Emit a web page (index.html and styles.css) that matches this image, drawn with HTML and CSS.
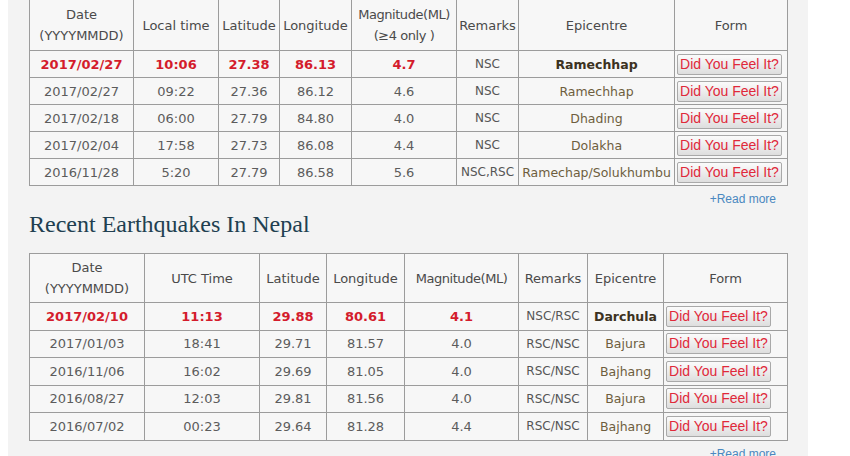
FILE: index.html
```html
<!DOCTYPE html>
<html>
<head>
<meta charset="utf-8">
<link rel="stylesheet" href="styles.css">
</head>
<body>
<div class="panel">
  <table class="quakes t1">
    <colgroup><col><col><col><col><col><col><col><col></colgroup>
    <tr class="head">
      <th>Date<br>(YYYYMMDD)</th>
      <th>Local time</th>
      <th>Latitude</th>
      <th>Longitude</th>
      <th class="mag">Magnitude(ML)<br>(≥4 only )</th>
      <th>Remarks</th>
      <th>Epicentre</th>
      <th>Form</th>
    </tr>
    <tr class="latest">
      <td>2017/02/27</td><td>10:06</td><td>27.38</td><td>86.13</td><td>4.7</td>
      <td class="rem">NSC</td><td class="epi">Ramechhap</td>
      <td class="form"><span class="btn">Did You Feel It?</span></td>
    </tr>
    <tr>
      <td>2017/02/27</td><td>09:22</td><td>27.36</td><td>86.12</td><td>4.6</td>
      <td class="rem">NSC</td><td class="epi">Ramechhap</td>
      <td class="form"><span class="btn">Did You Feel It?</span></td>
    </tr>
    <tr>
      <td>2017/02/18</td><td>06:00</td><td>27.79</td><td>84.80</td><td>4.0</td>
      <td class="rem">NSC</td><td class="epi">Dhading</td>
      <td class="form"><span class="btn">Did You Feel It?</span></td>
    </tr>
    <tr>
      <td>2017/02/04</td><td>17:58</td><td>27.73</td><td>86.08</td><td>4.4</td>
      <td class="rem">NSC</td><td class="epi">Dolakha</td>
      <td class="form"><span class="btn">Did You Feel It?</span></td>
    </tr>
    <tr>
      <td>2016/11/28</td><td>5:20</td><td>27.79</td><td>86.58</td><td>5.6</td>
      <td class="rem">NSC,RSC</td><td class="epi">Ramechap/Solukhumbu</td>
      <td class="form"><span class="btn">Did You Feel It?</span></td>
    </tr>
  </table>
  <div class="more"><a href="#">+Read more</a></div>

  <h2 class="title">Recent Earthquakes In Nepal</h2>

  <table class="quakes t2">
    <colgroup><col><col><col><col><col><col><col><col></colgroup>
    <tr class="head">
      <th>Date<br>(YYYYMMDD)</th>
      <th>UTC Time</th>
      <th>Latitude</th>
      <th>Longitude</th>
      <th class="mag">Magnitude(ML)</th>
      <th>Remarks</th>
      <th>Epicentre</th>
      <th>Form</th>
    </tr>
    <tr class="latest">
      <td>2017/02/10</td><td>11:13</td><td>29.88</td><td>80.61</td><td>4.1</td>
      <td class="rem">NSC/RSC</td><td class="epi">Darchula</td>
      <td class="form"><span class="btn">Did You Feel It?</span></td>
    </tr>
    <tr>
      <td>2017/01/03</td><td>18:41</td><td>29.71</td><td>81.57</td><td>4.0</td>
      <td class="rem">RSC/NSC</td><td class="epi">Bajura</td>
      <td class="form"><span class="btn">Did You Feel It?</span></td>
    </tr>
    <tr>
      <td>2016/11/06</td><td>16:02</td><td>29.69</td><td>81.05</td><td>4.0</td>
      <td class="rem">RSC/NSC</td><td class="epi">Bajhang</td>
      <td class="form"><span class="btn">Did You Feel It?</span></td>
    </tr>
    <tr>
      <td>2016/08/27</td><td>12:03</td><td>29.81</td><td>81.56</td><td>4.0</td>
      <td class="rem">RSC/NSC</td><td class="epi">Bajura</td>
      <td class="form"><span class="btn">Did You Feel It?</span></td>
    </tr>
    <tr>
      <td>2016/07/02</td><td>00:23</td><td>29.64</td><td>81.28</td><td>4.4</td>
      <td class="rem">RSC/NSC</td><td class="epi">Bajhang</td>
      <td class="form"><span class="btn">Did You Feel It?</span></td>
    </tr>
  </table>
  <div class="more"><a href="#">+Read more</a></div>
</div>
</body>
</html>
```

FILE: styles.css
```css
html, body {
  margin: 0;
  padding: 0;
  background: #ffffff;
  overflow: hidden;
}

.panel {
  margin-left: 8px;
  width: 758px;
  padding: 0 21px 20px 21px;
  background: #f3f3f3;
  margin-top: -1px;
}

.quakes {
  width: 758px;
  table-layout: fixed;
  border-collapse: collapse;
  border: 1px solid #555;
  background: #f7f7f7;
  font-family: "DejaVu Sans", Verdana, sans-serif;
  font-size: 13px;
  color: #5c5c5c;
}

.quakes th,
.quakes td {
  border: 1px solid #9c9c9c;
  text-align: center;
  vertical-align: middle;
  padding: 0 1px;
  white-space: nowrap;
  overflow: hidden;
}

.quakes th {
  font-weight: normal;
  font-size: 13px;
  line-height: 21px;
  color: #4a4a4a;
}

.quakes th.mag {
  letter-spacing: -0.45px;
}

.t1 .head { height: 51px; }
.t1 tr { height: 27px; }
.t2 .head { height: 49px; }
.t2 tr { height: 27.5px; }

.t1 col:nth-child(1) { width: 104px; }
.t1 col:nth-child(2) { width: 85px; }
.t1 col:nth-child(3) { width: 61px; }
.t1 col:nth-child(4) { width: 72px; }
.t1 col:nth-child(5) { width: 105px; }
.t1 col:nth-child(6) { width: 62px; }
.t1 col:nth-child(7) { width: 156px; }
.t1 col:nth-child(8) { width: 113px; }

.t2 col:nth-child(1) { width: 115px; }
.t2 col:nth-child(2) { width: 115px; }
.t2 col:nth-child(3) { width: 67px; }
.t2 col:nth-child(4) { width: 78px; }
.t2 col:nth-child(5) { width: 114px; }
.t2 col:nth-child(6) { width: 69px; }
.t2 col:nth-child(7) { width: 76px; }
.t2 col:nth-child(8) { width: 124px; }

.quakes td.rem {
  font-size: 12px;
  color: #555;
}

.quakes td.epi {
  font-size: 12.5px;
  color: #6e5e3e;
}

.quakes td.form {
  text-align: left;
  padding-left: 2px;
}

.quakes .latest td {
  color: #d41c2c;
  font-weight: bold;
}

.quakes .latest td.rem {
  color: #555;
  font-weight: normal;
}

.quakes .latest td.epi {
  color: #3c3222;
  font-weight: bold;
}

.btn {
  display: inline-block;
  box-sizing: border-box;
  width: 105px;
  height: 21px;
  line-height: 19px;
  border: 1px solid #a9a9a9;
  border-radius: 2px;
  background: linear-gradient(#fbfbfb, #dedede);
  font-family: "Liberation Sans", Arial, sans-serif;
  font-size: 14px;
  font-weight: normal;
  color: #e0283a;
  text-align: center;
  vertical-align: middle;
}

.quakes .latest td .btn {
  font-weight: normal;
  color: #e0283a;
}

.more {
  text-align: right;
  padding: 6px 11px 0 0;
  height: 18px;
  font-family: "Liberation Sans", Arial, sans-serif;
  font-size: 12px;
  line-height: 14px;
}

.more a {
  color: #4a88c0;
  text-decoration: none;
}

.title {
  margin: 0 0 15px 0;
  font-family: "Liberation Serif", "Times New Roman", serif;
  font-weight: normal;
  font-size: 24px;
  line-height: 28px;
  color: #213f50;
}
```
